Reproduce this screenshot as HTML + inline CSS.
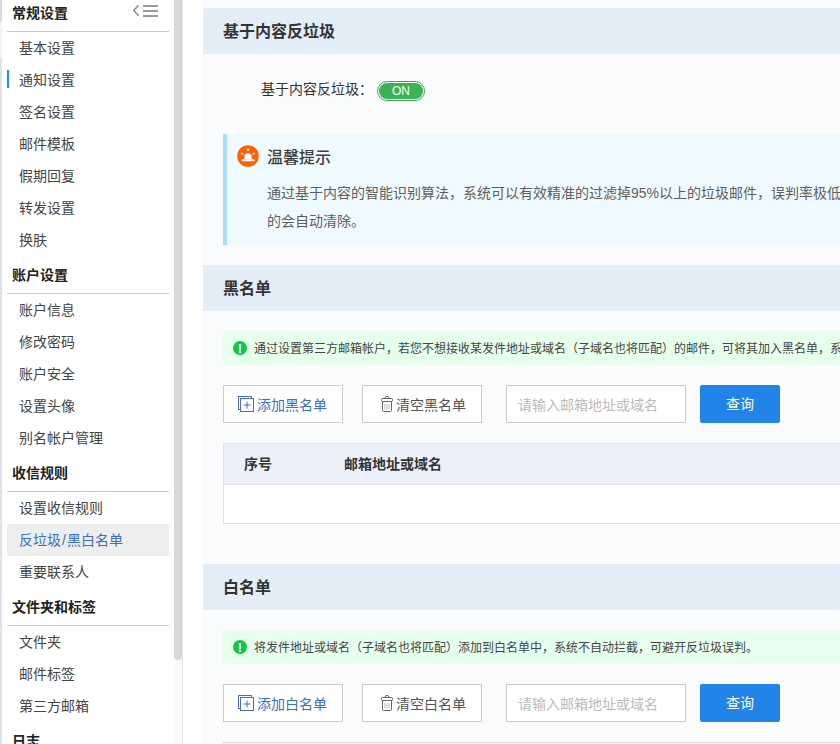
<!DOCTYPE html>
<html lang="zh-CN">
<head>
<meta charset="utf-8">
<title>反垃圾/黑白名单</title>
<style>
*{box-sizing:border-box;margin:0;padding:0}
html,body{width:840px;height:744px;overflow:hidden;background:#fff}
body{font-family:"Liberation Sans","Noto Sans CJK SC",sans-serif;font-size:14px;color:#333;position:relative}
.edge{position:absolute;left:0;top:0;width:2px;height:744px;background:#dfe2e8}
.edge i{position:absolute;left:0;width:2px;display:block}
.side{position:absolute;left:0;top:0;width:183px;height:744px;overflow:hidden;background:#fff}
.side-in{position:absolute;left:7px;top:-6px;width:162px}
.grp{height:38px;line-height:39px;border-bottom:1px solid #ccc;font-weight:bold;font-size:14px;color:#222;padding-left:5px;position:relative}
.it{height:32px;line-height:32px;padding-left:12px;font-size:14px;color:#444;position:relative}
.it.cur:before{content:"";position:absolute;left:0;top:6px;width:2px;height:18px;background:#0a9bf0}
.it.act{background:#eee;color:#3a6fc4}
.collapse{position:absolute;left:133px;top:4px;width:26px;height:14px}
.sb-thumb{position:absolute;left:174px;top:-10px;width:8px;height:670px;border-radius:4px;background:#d8d8d8}
.sb-line{position:absolute;left:182px;top:0;width:1px;height:744px;background:#e4e4e4}
.sb-track{position:absolute;left:174px;top:0;width:8px;height:744px;background:#fafafa}
.main{position:absolute;left:203px;top:0;width:700px;height:744px;background:#f9fbfd;overflow:hidden}
.bar{position:absolute;left:0;width:700px;height:46px;background:#e4eef9;line-height:48px;padding-left:20px;font-size:16px;font-weight:bold;color:#333}
.lbl{position:absolute;left:58px;top:78px;line-height:22px;font-size:14px;color:#333}
.tog{position:absolute;left:174px;top:81px;width:48px;height:20px;border-radius:10px;border:1px solid #3aa650;background:#fff;padding:1px}
.tog b{display:block;width:44px;height:16px;border-radius:8px;background:#3cb252;color:#fff;font-weight:normal;font-size:12px;line-height:16px;text-align:center}
.tip{position:absolute;left:20px;top:134px;width:700px;height:111px;background:#effaff;border-left:4px solid #a8dcf8}
.tip svg{position:absolute;left:10px;top:11px}
.tip h4{position:absolute;left:40px;top:12px;font-size:16px;line-height:24px;color:#3e3e3e;font-weight:500;white-space:nowrap}
.tip p{position:absolute;left:40px;top:45px;width:660px;white-space:nowrap;font-size:14px;line-height:28px;color:#5e5e5e}
.note{position:absolute;left:20px;width:700px;height:34px;background:#e6ffec;line-height:36px;font-size:12px;color:#444;padding-left:31px;white-space:nowrap}
.note svg{position:absolute;left:10px;top:10px}
.btn{position:absolute;height:38px;width:120px;border:1px solid #ccc;background:#fff;font-size:14px;line-height:36px;white-space:nowrap}
.btn svg{position:absolute}
.btn span{position:absolute;left:33px;top:1px}
.add{left:20px;color:#3a6fc4}
.clr{left:159px;color:#555}
.inp{position:absolute;left:303px;width:180px;height:38px;border:1px solid #ccc;background:#fff;font-size:14px;line-height:38px;color:#bbb;padding-left:11px;white-space:nowrap}
.qry{position:absolute;left:497px;width:80px;height:38px;background:#2283e8;border-radius:2px;color:#fff;text-align:center;line-height:38px;font-size:14px;font-weight:normal}
.tbl{position:absolute;left:20px;width:700px;border:1px solid #e2e2e2;background:#fff}
.tbl .h{height:41px;background:#ebf0fb;border-bottom:1px solid #e2e2e2;line-height:40px;font-weight:bold;font-size:14px;color:#333;position:relative}
.tbl .h span{position:absolute;top:0}
.tbl .r{height:38px}
</style>
</head>
<body>
<div class="side">
  <div class="side-in">
    <div class="grp">常规设置</div>
    <div class="it">基本设置</div>
    <div class="it cur">通知设置</div>
    <div class="it">签名设置</div>
    <div class="it">邮件模板</div>
    <div class="it">假期回复</div>
    <div class="it">转发设置</div>
    <div class="it">换肤</div>
    <div class="grp">账户设置</div>
    <div class="it">账户信息</div>
    <div class="it">修改密码</div>
    <div class="it">账户安全</div>
    <div class="it">设置头像</div>
    <div class="it">别名帐户管理</div>
    <div class="grp">收信规则</div>
    <div class="it">设置收信规则</div>
    <div class="it act">反垃圾<span style="padding:0 1px">/</span>黑白名单</div>
    <div class="it">重要联系人</div>
    <div class="grp">文件夹和标签</div>
    <div class="it">文件夹</div>
    <div class="it">邮件标签</div>
    <div class="it">第三方邮箱</div>
    <div class="grp">日志</div>
  </div>
  <svg class="collapse" viewBox="0 0 26 14" width="26" height="14">
    <path d="M5.5 1.2 L0.8 6.5 L5.5 11.8" fill="none" stroke="#8a8a8a" stroke-width="1.5"/>
    <rect x="10" y="1" width="15" height="2" fill="#999"/>
    <rect x="10" y="6" width="15" height="2" fill="#999"/>
    <rect x="10" y="11" width="15" height="2" fill="#999"/>
  </svg>
  <div class="sb-track"></div>
  <div class="sb-thumb"></div>
  <div class="sb-line"></div>
</div>
<div class="edge"><i style="top:0;height:21px;background:#d9d9d9"></i><i style="top:21px;height:37px;background:#f0f2f6"></i></div>

<div class="main">
  <div class="bar" style="top:8px">基于内容反垃圾</div>
  <div class="lbl">基于内容反垃圾：</div>
  <div class="tog"><b>ON</b></div>

  <div class="tip">
    <svg width="22" height="22" viewBox="0 0 22 22">
      <circle cx="11" cy="11" r="10.8" fill="#fd6204"/>
      <path d="M7.4 14.3 V11.8 a3.6 3.6 0 0 1 7.2 0 V14.3 Z" fill="#fff"/>
      <rect x="4.600" y="14.300" width="13" height="2" rx="0.600" fill="#fff"/>
      <rect x="10.100" y="3.600" width="1.800" height="2.500" rx="0.500" fill="#fff"/>
      <path d="M4.700 8.100 L6.100 9.400 M17.300 8.100 L15.900 9.400" stroke="#fff" stroke-width="1.2" stroke-linecap="round"/>
    </svg>
    <h4>温馨提示</h4>
    <p>通过基于内容的智能识别算法，系统可以有效精准的过滤掉95%以上的垃圾邮件，误判率极低，拦截<br>的会自动清除。</p>
  </div>

  <div class="bar" style="top:265px">黑名单</div>
  <div class="note" style="top:331px">
    <svg width="14" height="14" viewBox="0 0 14 14"><circle cx="7" cy="7" r="7" fill="#10c843"/><rect x="5.900" y="2.900" width="2.200" height="6.500" rx="0.700" fill="#fff"/><rect x="5.900" y="10.200" width="2.200" height="1.900" rx="0.600" fill="#fff"/></svg>
    通过设置第三方邮箱帐户，若您不想接收某发件地址或域名（子域名也将匹配）的邮件，可将其加入黑名单，系统将自动拒收。
  </div>
  <div class="btn add" style="top:385px">
    <svg style="left:14px;top:10px" width="17" height="17" viewBox="0 0 17 17"><rect x="0.5" y="0.5" width="13" height="13" fill="none" stroke="#4a68c8"/><rect x="2.5" y="2.5" width="13" height="13" fill="#fff" stroke="#4a68c8"/><path d="M5.5 9 H12.5 M9 5.5 V12.5" stroke="#4a68c8" fill="none"/></svg>
    <span>添加黑名单</span>
  </div>
  <div class="btn clr" style="top:385px">
    <svg style="left:17px;top:10px" width="14" height="17" viewBox="0 0 14 17"><path d="M5 2.2 a2 1.8 0 0 1 4 0" fill="none" stroke="#666"/><rect x="1.5" y="2.5" width="11" height="3" rx="1" fill="#fff" stroke="#666"/><path d="M2.5 5.5 V14.5 a1 1 0 0 0 1 1 H10.500 a1 1 0 0 0 1 -1 V5.5" fill="none" stroke="#666"/><path d="M4.900 8 V13.500 M7 8 V13.500 M9.100 8 V13.500" stroke="#b4b4b4" stroke-width="0.9" fill="none"/></svg>
    <span>清空黑名单</span>
  </div>
  <div class="inp" style="top:385px">请输入邮箱地址或域名</div>
  <div class="qry" style="top:385px">查询</div>
  <div class="tbl" style="top:443px">
    <div class="h"><span style="left:20px">序号</span><span style="left:120px">邮箱地址或域名</span></div>
    <div class="r"></div>
  </div>

  <div class="bar" style="top:564px">白名单</div>
  <div class="note" style="top:630px">
    <svg width="14" height="14" viewBox="0 0 14 14"><circle cx="7" cy="7" r="7" fill="#10c843"/><rect x="5.900" y="2.900" width="2.200" height="6.500" rx="0.700" fill="#fff"/><rect x="5.900" y="10.200" width="2.200" height="1.900" rx="0.600" fill="#fff"/></svg>
    将发件地址或域名（子域名也将匹配）添加到白名单中，系统不自动拦截，可避开反垃圾误判。
  </div>
  <div class="btn add" style="top:684px">
    <svg style="left:14px;top:10px" width="17" height="17" viewBox="0 0 17 17"><rect x="0.5" y="0.5" width="13" height="13" fill="none" stroke="#4a68c8"/><rect x="2.5" y="2.5" width="13" height="13" fill="#fff" stroke="#4a68c8"/><path d="M5.5 9 H12.5 M9 5.5 V12.5" stroke="#4a68c8" fill="none"/></svg>
    <span>添加白名单</span>
  </div>
  <div class="btn clr" style="top:684px">
    <svg style="left:17px;top:10px" width="14" height="17" viewBox="0 0 14 17"><path d="M5 2.2 a2 1.8 0 0 1 4 0" fill="none" stroke="#666"/><rect x="1.5" y="2.5" width="11" height="3" rx="1" fill="#fff" stroke="#666"/><path d="M2.5 5.5 V14.5 a1 1 0 0 0 1 1 H10.500 a1 1 0 0 0 1 -1 V5.5" fill="none" stroke="#666"/><path d="M4.900 8 V13.500 M7 8 V13.500 M9.100 8 V13.500" stroke="#b4b4b4" stroke-width="0.9" fill="none"/></svg>
    <span>清空白名单</span>
  </div>
  <div class="inp" style="top:684px">请输入邮箱地址或域名</div>
  <div class="qry" style="top:684px">查询</div>
  <div class="tbl" style="top:742px">
    <div class="h"><span style="left:20px">序号</span><span style="left:120px">邮箱地址或域名</span></div>
    <div class="r"></div>
  </div>
</div>
</body>
</html>
